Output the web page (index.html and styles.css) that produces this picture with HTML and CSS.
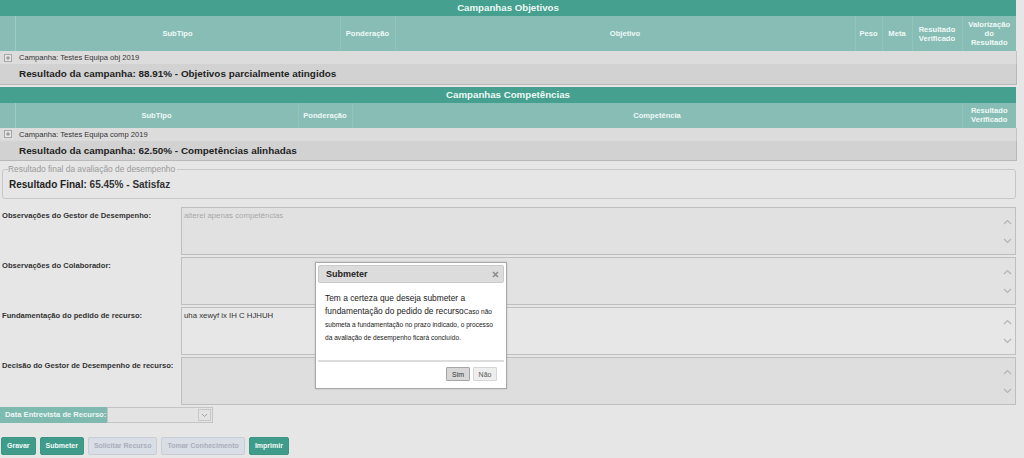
FILE: index.html
```html
<!DOCTYPE html>
<html lang="pt">
<head>
<meta charset="utf-8">
<title>Avaliação de desempenho</title>
<link rel="stylesheet" href="styles.css">
</head>
<body>
<div class="page">
  <table class="grid">
    <colgroup>
      <col class="w15"><col class="w325"><col class="w55"><col class="w460"><col class="w27"><col class="w30"><col class="w50"><col class="w54">
    </colgroup>
    <tr class="title"><th colspan="8">Campanhas Objetivos</th></tr>
    <tr class="head head-tall">
      <th class="exp"></th><th>SubTipo</th><th>Ponderação</th><th>Objetivo</th><th>Peso</th><th>Meta</th><th>Resultado<br>Verificado</th><th>Valorização<br>do<br>Resultado</th>
    </tr>
    <tr class="camp"><td class="expcell"><svg class="plus" width="8" height="8" viewBox="0 0 8 8"><rect x="0.5" y="0.5" width="7" height="7" fill="#e4e4e4" stroke="#a9a9a9"/><path d="M2 4h4M4 2v4" stroke="#8a8a8a"/></svg></td><td colspan="7">Campanha: Testes Equipa obj 2019</td></tr>
    <tr class="res"><td colspan="8">Resultado da campanha: 88.91% - Objetivos parcialmente atingidos</td></tr>
  </table>

  <table class="grid grid2">
    <colgroup>
      <col class="w15"><col class="w283"><col class="w54"><col class="w610"><col class="w54">
    </colgroup>
    <tr class="title"><th colspan="5">Campanhas Competências</th></tr>
    <tr class="head">
      <th class="exp"></th><th>SubTipo</th><th>Ponderação</th><th>Competência</th><th>Resultado<br>Verificado</th>
    </tr>
    <tr class="camp"><td class="expcell"><svg class="plus" width="8" height="8" viewBox="0 0 8 8"><rect x="0.5" y="0.5" width="7" height="7" fill="#e4e4e4" stroke="#a9a9a9"/><path d="M2 4h4M4 2v4" stroke="#8a8a8a"/></svg></td><td colspan="4">Campanha: Testes Equipa comp 2019</td></tr>
    <tr class="res"><td colspan="5">Resultado da campanha: 62.50% - Competências alinhadas</td></tr>
  </table>

  <fieldset class="final">
    <legend>Resultado final da avaliação de desempenho</legend>
    <div class="final-line"><span class="final-label">Resultado Final:</span> <span class="final-val">65.45% - Satisfaz</span></div>
  </fieldset>

  <div class="form">
    <div class="frow">
      <label class="flabel">Observações do Gestor de Desempenho:</label>
      <div class="ta ta-disabled"><div class="ta-text muted">alterei apenas competências</div><div class="ta-scroll"><svg width="9" height="6" viewBox="0 0 9 6"><path d="M1 5l3.5-3.5L8 5" fill="none" stroke="#b4b4b4" stroke-width="1.2"/></svg><svg width="9" height="6" viewBox="0 0 9 6"><path d="M1 1l3.5 3.5L8 1" fill="none" stroke="#b4b4b4" stroke-width="1.2"/></svg></div></div>
    </div>
    <div class="frow">
      <label class="flabel">Observações do Colaborador:</label>
      <div class="ta"><div class="ta-text"></div><div class="ta-scroll"><svg width="9" height="6" viewBox="0 0 9 6"><path d="M1 5l3.5-3.5L8 5" fill="none" stroke="#b4b4b4" stroke-width="1.2"/></svg><svg width="9" height="6" viewBox="0 0 9 6"><path d="M1 1l3.5 3.5L8 1" fill="none" stroke="#b4b4b4" stroke-width="1.2"/></svg></div></div>
    </div>
    <div class="frow">
      <label class="flabel">Fundamentação do pedido de recurso:</label>
      <div class="ta ta-light"><div class="ta-text">uha xewyf ix IH C HJHUH</div><div class="ta-scroll"><svg width="9" height="6" viewBox="0 0 9 6"><path d="M1 5l3.5-3.5L8 5" fill="none" stroke="#b4b4b4" stroke-width="1.2"/></svg><svg width="9" height="6" viewBox="0 0 9 6"><path d="M1 1l3.5 3.5L8 1" fill="none" stroke="#b4b4b4" stroke-width="1.2"/></svg></div></div>
    </div>
    <div class="frow">
      <label class="flabel">Decisão do Gestor de Desempenho de recurso:</label>
      <div class="ta ta-dark"><div class="ta-text"></div><div class="ta-scroll"><svg width="9" height="6" viewBox="0 0 9 6"><path d="M1 5l3.5-3.5L8 5" fill="none" stroke="#b4b4b4" stroke-width="1.2"/></svg><svg width="9" height="6" viewBox="0 0 9 6"><path d="M1 1l3.5 3.5L8 1" fill="none" stroke="#b4b4b4" stroke-width="1.2"/></svg></div></div>
    </div>
    <div class="drow">
      <span class="dlabel">Data Entrevista de Recurso:</span>
      <span class="dselect"><span class="dsel-val"></span><span class="dsel-arrow"><svg width="7" height="5" viewBox="0 0 7 5"><path d="M1 1l2.5 2.5L6 1" fill="none" stroke="#a0a0a0"/></svg></span></span>
    </div>
  </div>

  <div class="buttons">
    <button class="btn">Gravar</button>
    <button class="btn">Submeter</button>
    <button class="btn btn-off">Solicitar Recurso</button>
    <button class="btn btn-off">Tomar Conhecimento</button>
    <button class="btn">Imprimir</button>
  </div>
</div>

<div class="dialog">
  <div class="dlg-title"><span>Submeter</span><span class="dlg-close"><svg width="7" height="7" viewBox="0 0 7 7"><path d="M1 1l5 5M6 1L1 6" stroke="#8c8c8c" stroke-width="1.6"/></svg></span></div>
  <div class="dlg-body">Tem a certeza que deseja submeter a<br>fundamentação do pedido de recurso<small>Caso não<br>submeta a fundamentação no prazo indicado, o processo<br>da avaliação de desempenho ficará concluído.</small></div>
  <div class="dlg-pane">
    <button class="dbtn dbtn-focus">Sim</button>
    <button class="dbtn">Não</button>
  </div>
</div>
</body>
</html>
```
FILE: styles.css
```css
* { box-sizing: border-box; }
html, body { margin: 0; padding: 0; }
body {
  width: 1024px;
  height: 458px;
  overflow: hidden;
  background: #e6e6e6;
  font-family: "Liberation Sans", Arial, sans-serif;
  color: #222;
  position: relative;
}
.page { width: 1016px; }

.grid { width: 1016px; border-collapse: collapse; table-layout: fixed; }
.grid2 { margin-top: 2px; }
.w15 { width: 15px; } .w325 { width: 325px; } .w55 { width: 55px; } .w460 { width: 460px; }
.w27 { width: 27px; } .w30 { width: 30px; } .w50 { width: 50px; } .w54 { width: 54px; }
.w283 { width: 283px; } .w610 { width: 610px; }

.grid .title th {
  background: #45a090;
  color: #eef8f5;
  font-size: 9.7px;
  font-weight: bold;
  height: 16px;
  padding: 0;
  line-height: 16px;
}
.grid .head th {
  background: #87bdb5;
  color: #f0f9f7;
  font-size: 7.6px;
  font-weight: bold;
  height: 25px;
  padding: 0;
  line-height: 9px;
  border-left: 1px solid #92c4bc;
  white-space: nowrap;
}
.grid .head-tall th { height: 35px; }
.grid .head th.exp { border-left: none; border-right: 1px solid #9fcdc6; }
.grid .camp td {
  background: #dcdcdc;
  height: 13px;
  padding: 0 0 0 4px;
  font-size: 7.6px;
  line-height: 13px;
  color: #333;
  border-right: 1px solid #c4c4c4;
}
.grid .camp td.expcell { border-right: none; padding-left: 4px; }
.plus { display: block; }
.grid .res td {
  background: #d2d2d2;
  height: 20px;
  padding: 0 0 0 19px;
  font-size: 9.9px;
  font-weight: bold;
  color: #222;
  line-height: 19px;
  border-bottom: 1px solid #b9b9b9;
  border-right: 1px solid #b9b9b9;
}

.final {
  margin: 4px 0 0 2px;
  width: 1014px;
  padding: 0 7px 5px 6px;
  border: 1px solid #c6c6c6;
  border-radius: 3px;
  height: 34px;
}
.final legend {
  font-size: 8.4px;
  color: #9a9a9a;
  padding: 0 2px 0 0;
  margin-left: -1px;
  line-height: 9px;
}
.final-line { font-size: 10px; color: #222; padding-top: 5px; }
.final-label { font-weight: bold; }
.final-val { font-weight: bold; color: #333; }

.form { margin-top: 8px; }
.frow { display: flex; height: 48px; margin-bottom: 2px; }
.flabel {
  width: 181px;
  flex: none;
  font-size: 7.6px;
  font-weight: bold;
  color: #333;
  padding: 4px 0 0 2px;
  line-height: 10px;
  white-space: nowrap;
}
.ta {
  flex: 1;
  display: flex;
  border: 1px solid #bebebe;
  background: #e2e2e2;
}
.ta-disabled { background: #e1e1e1; }
.ta-light { background: #e7e7e7; }
.ta-dark { background: #dedede; }
.ta-text { flex: 1; font-size: 7.8px; padding: 3px 2px; color: #333; line-height: 10px; }
.ta-text.muted { color: #a8a8a8; }
.ta-scroll {
  width: 16px;
  display: flex;
  flex-direction: column;
  justify-content: space-around;
  align-items: center;
  padding: 5px 0 4px;
}
.ta-scroll svg { display: block; }

.drow { display: flex; height: 16px; margin-top: 1px; }
.dlabel {
  width: 107px;
  background: #7fbab1;
  color: #eef7f5;
  font-size: 7.6px;
  font-weight: bold;
  line-height: 16px;
  padding-left: 5px;
  white-space: nowrap;
}
.dselect {
  width: 106px;
  display: flex;
  border: 1px solid #c4c4c4;
  background: #e3e3e3;
}
.dsel-val { flex: 1; }
.dsel-arrow {
  width: 13px;
  margin: 1px;
  border: 1px solid #c8c8c8;
  display: flex;
  align-items: center;
  justify-content: center;
}

.buttons { display: flex; gap: 4px; padding: 14px 0 0 1px; }
.btn {
  height: 18px;
  padding: 0 5px;
  border: 1px solid #3c9483;
  background: #3f9c8b;
  color: #f3faf8;
  font-family: inherit;
  font-size: 7px;
  font-weight: bold;
  line-height: 16px;
  border-radius: 2px;
  white-space: nowrap;
}
.btn-off {
  background: #d9dde5;
  border-color: #c9cdd6;
  color: #a9aebb;
}

.dialog {
  position: absolute;
  left: 315px;
  top: 262px;
  width: 192px;
  height: 127px;
  background: #fff;
  border: 1px solid #a8a8a8;
  padding: 2px;
  box-shadow: 0 0 2px rgba(0,0,0,0.15);
}
.dlg-title {
  height: 18px;
  display: flex;
  justify-content: space-between;
  align-items: center;
  background: #dcdcdc;
  border: 1px solid #cacaca;
  border-radius: 2px;
  padding: 0 3px 0 7px;
  font-size: 9px;
  font-weight: bold;
  color: #222;
}
.dlg-close {
  width: 10px; height: 10px;
  display: flex; align-items: center; justify-content: center;
}
.dlg-close svg { display: block; }
.dlg-body {
  height: 77px;
  padding: 9px 4px 0 7px;
  font-size: 8.4px;
  line-height: 13px;
  color: #222;
  white-space: nowrap;
}
.dlg-body small { font-size: 6.6px; }
.dlg-pane {
  border-top: 2px solid #dcdcdc;
  display: flex;
  justify-content: flex-end;
  gap: 3px;
  padding: 5px 7px 0 0;
}
.dbtn {
  width: 24px;
  height: 14px;
  padding: 0;
  font-family: inherit;
  font-size: 7px;
  color: #555;
  background: #eeeeee;
  border: 1px solid #d6d6d6;
  border-radius: 1px;
}
.dbtn-focus { background: #d7d7d7; border-color: #a6a6a6; color: #333; }
```
